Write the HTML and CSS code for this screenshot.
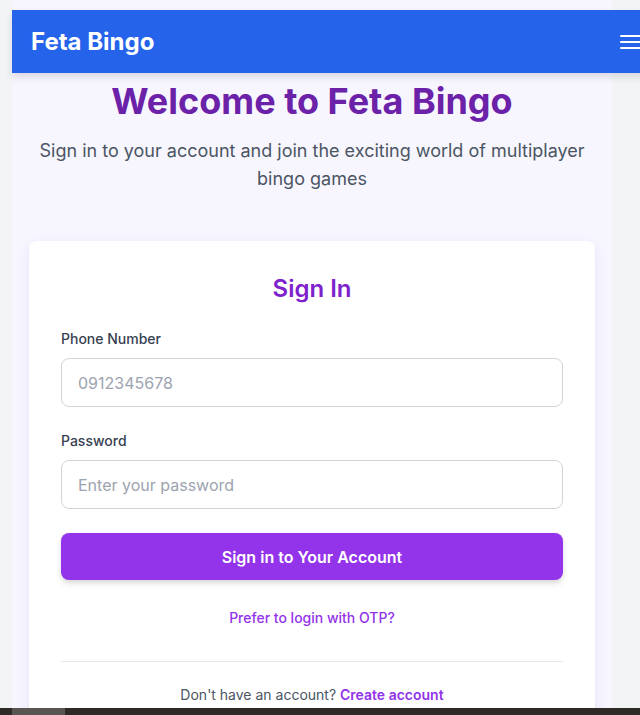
FILE: index.html
```html
<!DOCTYPE html>
<html lang="en">
<head>
<meta charset="utf-8">
<title>Feta Bingo - Sign In</title>
<link rel="stylesheet" href="styles.css">
</head>
<body>
<div class="screen">
  <div class="page">
    <header class="topbar">
      <span class="brand">Feta Bingo</span>
      <button class="menu" aria-label="Menu">
        <span></span><span></span><span></span>
      </button>
    </header>
    <main class="content">
      <h1 class="title">Welcome to Feta Bingo</h1>
      <p class="subtitle">Sign in to your account and join the exciting world of multiplayer bingo games</p>
      <section class="card">
        <h2 class="card-title">Sign In</h2>
        <form class="form">
          <label class="label" for="phone">Phone Number</label>
          <input class="input" id="phone" type="tel" placeholder="0912345678">
          <label class="label" for="pw">Password</label>
          <input class="input" id="pw" type="password" placeholder="Enter your password">
          <button class="submit" type="button">Sign in to Your Account</button>
        </form>
        <a class="otp" href="#">Prefer to login with OTP?</a>
        <hr class="divider">
        <p class="signup">Don't have an account? <a href="#">Create account</a></p>
      </section>
    </main>
  </div>
  <div class="taskbar"><span class="task"></span></div>
</div>
</body>
</html>
```

FILE: styles.css
```css
* { box-sizing: border-box; }
html, body {
  margin: 0;
  padding: 0;
  height: 715px;
  overflow: hidden;
  background: #f3f4f6;
  font-family: Inter, "Noto Sans", sans-serif;
}
.screen {
  display: flex;
  flex-direction: column;
  height: 715px;
}
.page {
  height: 708px;
  width: 600px;
  margin-left: 12px;
  background: #f7f5fe;
  padding-top: 10px;
  overflow: visible;
}
.topbar {
  width: 648px;
  height: 63px;
  background: #2563eb;
  display: flex;
  align-items: center;
  justify-content: space-between;
  padding: 0 4px 0 19px;
  box-shadow: 0 4px 8px rgba(0, 0, 0, 0.12);
  position: relative;
  z-index: 2;
}
.brand {
  color: #ffffff;
  font-weight: 700;
  font-size: 24px;
}
.menu {
  width: 24px;
  height: 20px;
  border: 0;
  background: transparent;
  display: flex;
  flex-direction: column;
  justify-content: space-between;
  margin-right: 12px;
  padding: 3px 0;
}
.menu span {
  display: block;
  height: 2px;
  background: #ffffff;
  border-radius: 1px;
}
.content {
  padding: 8px 17px 0;
  height: 635px;
  overflow: hidden;
}
.title {
  margin: 0;
  text-align: center;
  color: #6b21a8;
  font-size: 36px;
  line-height: 40px;
  font-weight: 700;
}
.subtitle {
  margin: 16px 0 0;
  text-align: center;
  color: #4b5563;
  font-size: 18px;
  line-height: 28px;
  padding: 0 4px;
}
.card {
  margin-top: 48px;
  background: #ffffff;
  border-radius: 8px;
  box-shadow: 0 4px 14px rgba(88, 60, 180, 0.07), 0 1px 3px rgba(0, 0, 0, 0.05);
  padding: 32px 32px 40px;
  display: flex;
  flex-direction: column;
}
.card-title {
  margin: 0;
  text-align: center;
  color: #7e22ce;
  font-size: 24px;
  line-height: 32px;
  font-weight: 600;
}
.form {
  display: flex;
  flex-direction: column;
  margin-top: 24px;
}
.label {
  font-size: 14px;
  line-height: 20px;
  font-weight: 500;
  color: #374151;
  margin-bottom: 9px;
}
.input {
  height: 49px;
  border: 1px solid #d1d5db;
  border-radius: 8px;
  padding: 0 16px;
  font-family: inherit;
  font-size: 16px;
  color: #111827;
  background: #ffffff;
  margin-bottom: 24px;
}
.input::placeholder { color: #9ca3af; }
.submit {
  margin-top: 0;
  height: 47px;
  border: 0;
  border-radius: 8px;
  background: #9333ea;
  color: #ffffff;
  font-family: inherit;
  font-size: 16px;
  font-weight: 600;
  box-shadow: 0 4px 6px rgba(0, 0, 0, 0.1), 0 2px 4px rgba(0, 0, 0, 0.06);
}
.otp {
  margin-top: 28px;
  text-align: center;
  color: #9333ea;
  font-size: 14px;
  line-height: 20px;
  font-weight: 500;
  text-decoration: none;
}
.divider {
  margin: 33px 0 0;
  border: 0;
  border-top: 1px solid #e5e7eb;
}
.signup {
  margin: 23px 0 0;
  text-align: center;
  font-size: 14px;
  line-height: 20px;
  color: #4b5563;
}
.signup a {
  color: #9333ea;
  font-weight: 600;
  text-decoration: none;
}
.taskbar {
  height: 7px;
  background: #2e2a25;
  display: flex;
  padding-left: 12px;
}
.task {
  width: 53px;
  height: 7px;
  background: #5a5550;
}
```
